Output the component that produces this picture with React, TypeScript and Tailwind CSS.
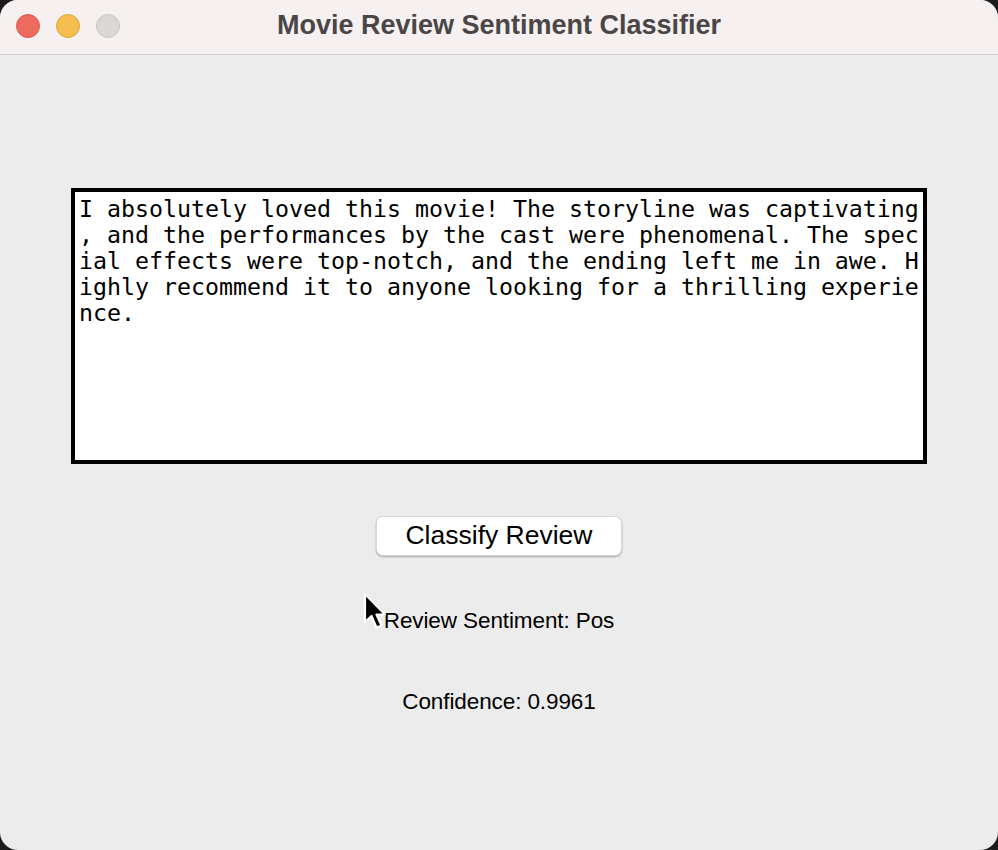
import React from "react";

const reviewLines = [
  "I absolutely loved this movie! The storyline was captivating",
  ", and the performances by the cast were phenomenal. The spec",
  "ial effects were top-notch, and the ending left me in awe. H",
  "ighly recommend it to anyone looking for a thrilling experie",
  "nce.",
];

// mouse pointer drawn over the result label
const Cursor = () => (
  <svg
    className="absolute left-[361px] top-[591px]"
    width="26"
    height="40"
    viewBox="0 0 26 40"
  >
    <path
      d="M4 3 L4 31 L10.5 25 L15.5 36.5 L20.5 34.5 L15.5 23.5 L24 23.5 Z"
      fill="#000"
      stroke="#fff"
      strokeWidth="2.2"
      strokeLinejoin="round"
    />
  </svg>
);

const App = () => {
  return (
    <div className="w-[998px] h-[850px] bg-[#1c1c1c]">
      <div className="relative w-[998px] h-[850px] rounded-[18px] overflow-hidden bg-[#ececec] flex flex-col">
        {/* Title bar */}
        <div className="relative h-[55px] bg-[#f6f0f0] border-b border-[#d2cfcf] flex items-center justify-center shrink-0">
          <div className="absolute left-[16px] top-[14px] flex gap-[16px]">
            <div className="w-[24px] h-[24px] rounded-full bg-[#ee6a5f] border border-[#d85a50]" />
            <div className="w-[24px] h-[24px] rounded-full bg-[#f5bf4f] border border-[#dea63c]" />
            <div className="w-[24px] h-[24px] rounded-full bg-[#dcd7d7] border border-[#c9c4c4]" />
          </div>
          <span className="font-['Liberation_Sans',Arial,sans-serif] font-bold text-[27px] text-[#4b4646] mt-[-4px]">
            Movie Review Sentiment Classifier
          </span>
        </div>

        {/* Body */}
        <div className="flex flex-col items-center pt-[133px]">
          <div className="w-[856px] h-[276px] border-[4px] border-black bg-white pl-[4px] pt-[4px]">
            <pre className="font-['DejaVu_Sans_Mono',monospace] text-[23.25px] leading-[26px] text-black whitespace-pre m-0">
              {reviewLines.join("\n")}
            </pre>
          </div>

          <button className="mt-[52px] w-[246px] h-[40px] rounded-[7px] bg-white shadow-[0_1px_2px_rgba(0,0,0,0.3)] border border-[#d8d8d8] font-['Liberation_Sans',Arial,sans-serif] text-[26.5px] text-black flex items-center justify-center">
            Classify Review
          </button>

          <div className="mt-[52px] h-[26px] flex items-center font-['Liberation_Sans',Arial,sans-serif] text-[22.5px] tracking-[-0.1px] text-black">
            Review Sentiment: Pos
          </div>

          <div className="mt-[55px] h-[26px] flex items-center font-['Liberation_Sans',Arial,sans-serif] text-[22.5px] tracking-[-0.1px] text-black">
            Confidence: 0.9961
          </div>
        </div>

        <Cursor />
      </div>
    </div>
  );
};

export default App;
